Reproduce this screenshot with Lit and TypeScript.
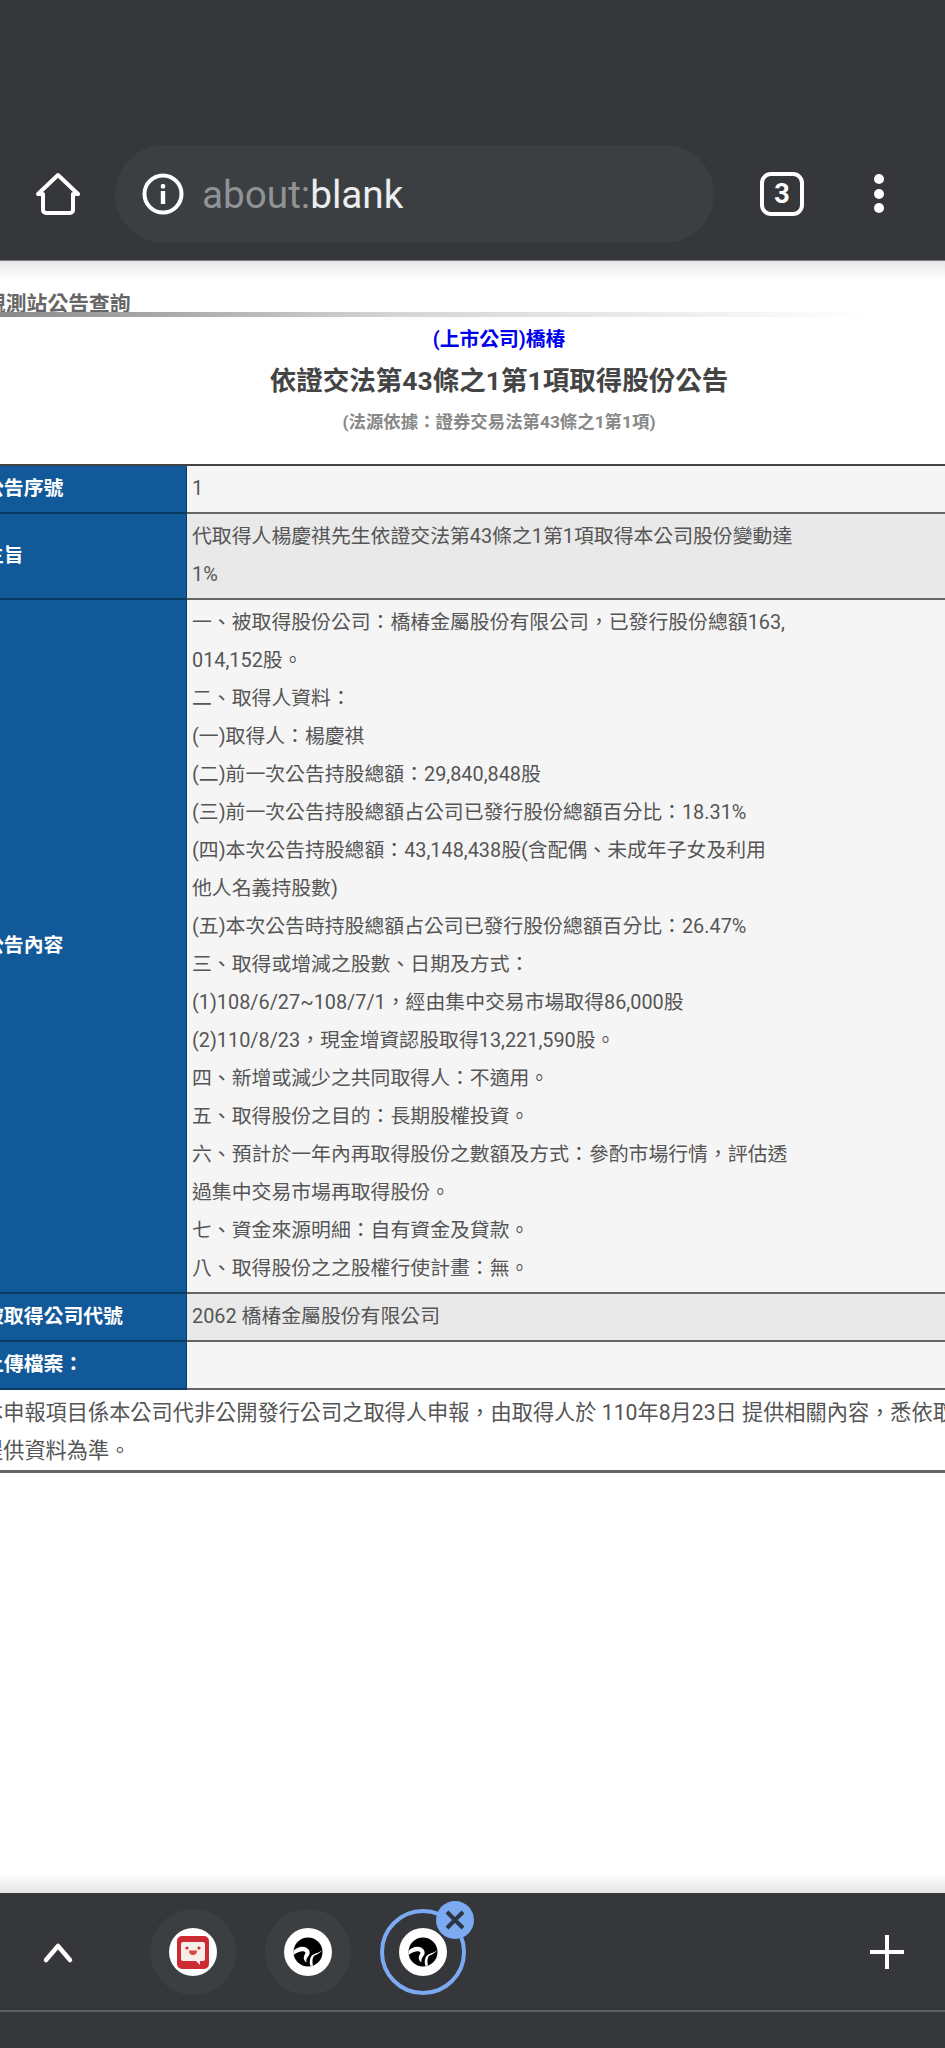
import { LitElement, html, css, svg } from "lit";
import { customElement } from "lit/decorators.js";

const C = "\uFF1A"; // fullwidth colon
const K = "\uFF0C"; // fullwidth comma

const rows: { label: string; lines: string[] }[] = [
  { label: "公告序號", lines: ["1"] },
  { label: "主旨", lines: ["代取得人楊慶祺先生依證交法第43條之1第1項取得本公司股份變動達", "1%"] },
  {
    label: "公告內容",
    lines: [
      `一、被取得股份公司${C}橋椿金屬股份有限公司${K}已發行股份總額163,`,
      "014,152股。",
      `二、取得人資料${C}`,
      `(一)取得人${C}楊慶祺`,
      `(二)前一次公告持股總額${C}29,840,848股`,
      `(三)前一次公告持股總額占公司已發行股份總額百分比${C}18.31%`,
      `(四)本次公告持股總額${C}43,148,438股(含配偶、未成年子女及利用`,
      "他人名義持股數)",
      `(五)本次公告時持股總額占公司已發行股份總額百分比${C}26.47%`,
      `三、取得或增減之股數、日期及方式${C}`,
      `(1)108/6/27~108/7/1${K}經由集中交易市場取得86,000股`,
      `(2)110/8/23${K}現金增資認股取得13,221,590股。`,
      `四、新增或減少之共同取得人${C}不適用。`,
      `五、取得股份之目的${C}長期股權投資。`,
      `六、預計於一年內再取得股份之數額及方式${C}參酌市場行情${K}評估透`,
      "過集中交易市場再取得股份。",
      `七、資金來源明細${C}自有資金及貸款。`,
      `八、取得股份之之股權行使計畫${C}無。`,
    ],
  },
  { label: "被取得公司代號", lines: ["2062 橋椿金屬股份有限公司"] },
  { label: `上傳檔案${C}`, lines: [""] },
];

const globe = svg`<svg class="fav" viewBox="0 0 48 48">
  <circle cx="24" cy="24" r="24" fill="#fff"/>
  <circle cx="24" cy="24" r="14.5" fill="#000"/>
  <path d="M9.5 23C12 19.5 18 17.5 22 19.5 26.5 22 26.5 26 24 28.5 22.5 30.5 22 32 22.5 34.5 19.5 32.5 19 29 21 26 22.5 24 20 23 17 23.5 14 24 12 25 9.5 27Z" fill="#fff"/>
  <path d="M38.5 22C36 25 33 26.5 30.5 27.5 28.5 29 28 33 29 37.5L26.5 38C25 34 26 29.5 28 27.5 31 25 35 25 38.5 22Z" fill="#fff"/>
</svg>`;

const chat = svg`<svg class="fav" viewBox="0 0 48 48">
  <circle cx="24" cy="24" r="24" fill="#fff"/>
  <path d="M13 8H35A5 5 0 0 1 40 13V36A5 5 0 0 1 35 41H13A5 5 0 0 1 8 36V13A5 5 0 0 1 13 8Z" fill="#cc2b33"/>
  <path d="M14 14H34A2 2 0 0 1 36 16V31A2 2 0 0 1 34 33H31V37L27 33H14A2 2 0 0 1 12 31V16A2 2 0 0 1 14 14Z" fill="#f7eeeb"/>
  <circle cx="18" cy="20" r="1.6" fill="#cc2b33"/>
  <circle cx="30" cy="20" r="1.6" fill="#cc2b33"/>
  <path d="M20 22.5H28C28 25.5 26.5 27 24 27S20 25.5 20 22.5Z" fill="#d8433f"/>
</svg>`;

@customElement("app-root")
export class AppRoot extends LitElement {
  static styles = css`
    :host {
      display: flex;
      flex-direction: column;
      width: 945px;
      height: 2048px;
      overflow: hidden;
      background: #fff;
      font-family: Roboto, "Noto Sans CJK TC", sans-serif;
    }
    .top {
      height: 261px;
      flex: none;
      box-sizing: border-box;
      padding: 145px 0 18px 36px;
      background: #36373b;
      display: flex;
      align-items: center;
      border-bottom: 1px solid #77787a;
    }
    .home { width: 44px; height: 44px; flex: none; }
    .omni {
      margin-left: 35px;
      width: 599px;
      height: 98px;
      flex: none;
      box-sizing: border-box;
      padding-left: 27px;
      border-radius: 49px;
      background: #3c3f42;
      display: flex;
      align-items: center;
      gap: 18px;
      font-size: 38.7px;
      color: #eceef0;
    }
    .info { width: 42px; height: 42px; flex: none; }
    .url { padding-top: 2px; }
    .dim { color: #909396; }
    .tabs {
      margin-left: 46px;
      width: 44px;
      height: 44px;
      flex: none;
      box-sizing: border-box;
      border: 4px solid #fff;
      border-radius: 11px;
      color: #fff;
      font-size: 27px;
      font-weight: 700;
      display: flex;
      align-items: center;
      justify-content: center;
    }
    .dots {
      margin-left: 70px;
      display: flex;
      flex-direction: column;
      gap: 4.5px;
    }
    .dots i { width: 10px; height: 10px; border-radius: 50%; background: #fff; display: block; }
    .main { flex: 1; display: flex; flex-direction: column; min-height: 0; }
    .shade-top { height: 18px; flex: none; background: linear-gradient(#e6e6e6, #fff); }
    .crumb {
      height: 33px;
      line-height: 50px;
      margin-left: -15px;
      font-size: 20.8px;
      font-weight: 700;
      color: #666;
      white-space: nowrap;
      flex: none;
    }
    .rule {
      height: 5px;
      width: 870px;
      flex: none;
      background: linear-gradient(90deg, #8a8a8a, #d4d4d4 45%, #fff);
    }
    .co, .title, .legal { text-align: center; font-weight: 700; flex: none; padding-left: 53px; }
    .co { margin-top: 8px; line-height: 30px; font-size: 19.8px; color: #0000ee; }
    .title { margin-top: 6px; line-height: 40px; font-size: 26.5px; color: #444; }
    .legal { margin-top: 8px; line-height: 26px; font-size: 17.4px; color: #888; }
    .table {
      margin: 29px 0 0 -20px;
      width: 1040px;
      flex: none;
      border-top: 2px solid #444;
      display: grid;
      grid-template-columns: 207px 1fr;
      font-size: 19.85px;
      line-height: 38px;
    }
    .label, .value { padding: 4px 5px; border-bottom: 2px solid #666; white-space: nowrap; }
    .label {
      padding-left: 4px;
      background: #12599a;
      color: #fff;
      font-weight: 700;
      display: flex;
      align-items: center;
      border-right: 1px solid #0b3a63;
      border-bottom-color: #0b3a63;
    }
    .value { color: #555; background: #f5f5f5; min-height: 38px; }
    .value.alt { background: #e9e9e9; }
    .line { min-height: 38px; }
    .note {
      margin-left: -18px;
      width: 1040px;
      box-sizing: border-box;
      padding-top: 4px;
      flex: none;
      font-size: 21.2px;
      line-height: 38px;
      color: #555;
      white-space: nowrap;
      border-bottom: 3px solid #666;
    }
    .shade-bottom {
      margin-top: auto;
      height: 18px;
      flex: none;
      background: linear-gradient(#fff, #e4e4e4);
    }
    .bottom { height: 155px; flex: none; background: #36373b; }
    .strip {
      height: 117px;
      box-sizing: border-box;
      padding-left: 40px;
      display: flex;
      align-items: center;
    }
    .chev { width: 36px; height: 24px; flex: none; margin-right: 74px; }
    .tab {
      position: relative;
      width: 86px;
      height: 86px;
      flex: none;
      margin-right: 29px;
      border-radius: 50%;
      background: #3c3f42;
      display: flex;
      align-items: center;
      justify-content: center;
    }
    .tab.on {
      background: none;
      box-sizing: border-box;
      border: 4px solid #7ba9f2;
    }
    .fav { width: 48px; height: 48px; display: block; }
    .close {
      position: absolute;
      width: 38px;
      height: 38px;
      top: -12px;
      right: -12px;
    }
    .plus { width: 34px; height: 34px; flex: none; margin-left: auto; margin-right: 41px; }
    .divider { height: 2px; background: #5d5e62; }
  `;

  render() {
    return html`
      <div class="top">
        <svg class="home" viewBox="0 0 44 44" fill="none" stroke="#fff" stroke-width="4" stroke-linejoin="round">
          <path d="M22 3 42 22H37V38A3 3 0 0 1 34 41H10A3 3 0 0 1 7 38V22H2Z" />
        </svg>
        <div class="omni">
          <svg class="info" viewBox="0 0 42 42" fill="none">
            <circle cx="21" cy="21" r="18.5" stroke="#fff" stroke-width="4" />
            <rect x="18.8" y="18" width="4.4" height="13" fill="#fff" />
            <rect x="18.8" y="11" width="4.4" height="4.4" rx="1.5" fill="#fff" />
          </svg>
          <span class="url"><span class="dim">about:</span>blank</span>
        </div>
        <div class="tabs">3</div>
        <div class="dots"><i></i><i></i><i></i></div>
      </div>
      <div class="main">
        <div class="shade-top"></div>
        <div class="crumb">觀測站公告查詢</div>
        <div class="rule"></div>
        <div class="co">(上市公司)橋椿</div>
        <div class="title">依證交法第43條之1第1項取得股份公告</div>
        <div class="legal">(法源依據${C}證券交易法第43條之1第1項)</div>
        <div class="table">
          ${rows.map(
            (r, i) => html`
              <div class="label">${r.label}</div>
              <div class="value ${i % 2 ? "alt" : ""}">
                ${r.lines.map((l) => html`<div class="line">${l}</div>`)}
              </div>
            `
          )}
        </div>
        <div class="note">
          <div>本申報項目係本公司代非公開發行公司之取得人申報${K}由取得人於 110年8月23日 提供相關內容${K}悉依取得人</div>
          <div>提供資料為準。</div>
        </div>
        <div class="shade-bottom"></div>
      </div>
      <div class="bottom">
        <div class="strip">
          <svg class="chev" viewBox="0 0 36 24" fill="none" stroke="#fff" stroke-width="4.5" stroke-linecap="round" stroke-linejoin="round">
            <path d="M6 20 18 6 30 20" />
          </svg>
          <div class="tab">${chat}</div>
          <div class="tab">${globe}</div>
          <div class="tab on">
            ${globe}
            <svg class="close" viewBox="0 0 38 38" fill="none">
              <circle cx="19" cy="19" r="19" fill="#7ba9f2" />
              <path d="M11 11 27 27M27 11 11 27" stroke="#2b3440" stroke-width="4" />
            </svg>
          </div>
          <svg class="plus" viewBox="0 0 34 34" fill="none" stroke="#fff" stroke-width="4">
            <path d="M17 0V34M0 17H34" />
          </svg>
        </div>
        <div class="divider"></div>
      </div>
    `;
  }
}
